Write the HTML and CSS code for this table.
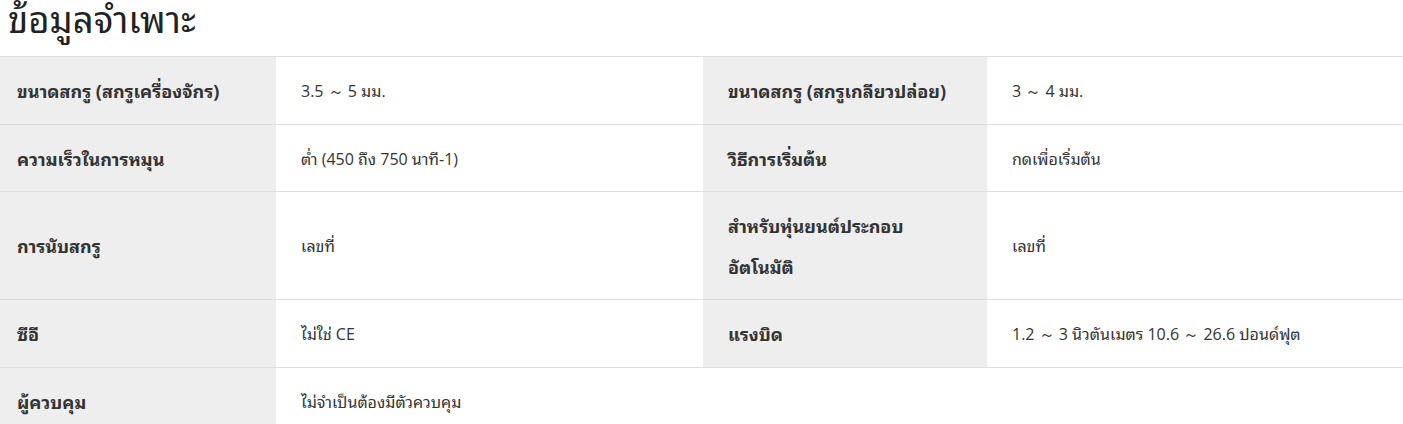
FILE: index.html
```html
<!DOCTYPE html>
<html lang="th">
<head>
<meta charset="utf-8">
<link rel="stylesheet" href="styles.css">
</head>
<body>
<h2 class="title">ข้อมูลจำเพาะ</h2>
<table class="spec">
  <colgroup>
    <col class="c1"><col class="c2"><col class="c3"><col class="c4">
  </colgroup>
  <tr>
    <th class="first">ขนาดสกรู (สกรูเครื่องจักร)</th><td>3.5 ～ 5 มม.</td>
    <th>ขนาดสกรู (สกรูเกลียวปล่อย)</th><td>3 ～ 4 มม.</td>
  </tr>
  <tr>
    <th class="first">ความเร็วในการหมุน</th><td>ต่ำ (450 ถึง 750 นาที-1)</td>
    <th>วิธีการเริ่มต้น</th><td>กดเพื่อเริ่มต้น</td>
  </tr>
  <tr>
    <th class="first">การนับสกรู</th><td>เลขที่</td>
    <th>สำหรับหุ่นยนต์ประกอบ<br>อัตโนมัติ</th><td>เลขที่</td>
  </tr>
  <tr>
    <th class="first">ซีอี</th><td>ไม่ใช่ CE</td>
    <th>แรงบิด</th><td>1.2 ～ 3 นิวตันเมตร 10.6 ～ 26.6 ปอนด์ฟุต</td>
  </tr>
  <tr class="last">
    <th class="first">ผู้ควบคุม</th><td>ไม่จำเป็นต้องมีตัวควบคุม</td>
    <td class="empty"></td><td class="empty"></td>
  </tr>
</table>
</body>
</html>
```
FILE: styles.css
```css
html, body {
  margin: 0;
  padding: 0;
  background: #fff;
}
body {
  font-family: "Open Sans", "Noto Sans Thai Looped", "Noto Sans Thai", sans-serif;
  color: #333;
}
.title {
  margin: 0;
  padding: 0 8px;
  height: 56px;
  font-size: 36.5px;
  font-weight: 400;
  line-height: 38px;
  color: #222;
}
.spec {
  width: 1403px;
  border-collapse: collapse;
  table-layout: fixed;
  font-size: 16px;
}
.c1 { width: 276px; }
.c2 { width: 427px; }
.c3 { width: 284px; }
.c4 { width: 416px; }
.spec tr {
  border-top: 1px solid #ddd;
  border-bottom: 1px solid #ddd;
}
.spec th, .spec td {
  padding: 14px 25px 12px 25px;
  line-height: 40.5px;
  text-align: left;
  vertical-align: middle;
}
.spec th {
  background: #eee;
  font-size: 18px;
  font-weight: 700;
  color: #333;
}
.spec th.first {
  padding-left: 17px;
}
.spec td {
  background: #fff;
  font-weight: 400;
}
```
